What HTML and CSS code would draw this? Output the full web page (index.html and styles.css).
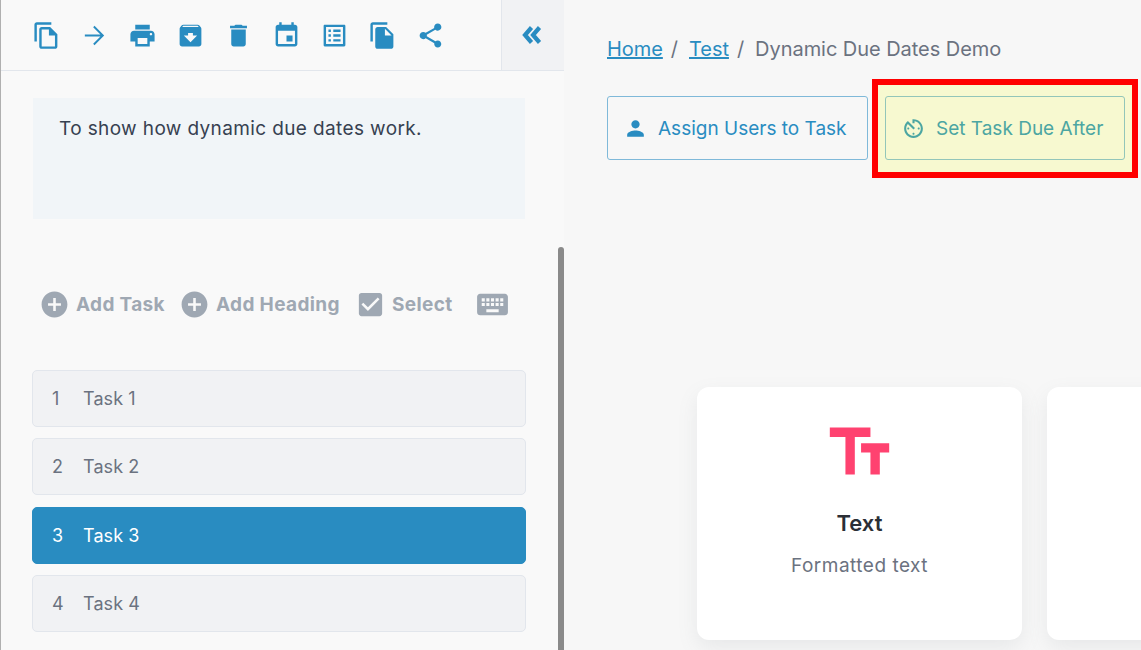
FILE: index.html
```html
<!DOCTYPE html>
<html lang="en">
<head>
<meta charset="utf-8">
<title>Dynamic Due Dates Demo</title>
<link rel="stylesheet" href="styles.css">
</head>
<body>
<div class="app">
  <aside class="sidebar">
    <div class="toolbar">
      <div class="tools">
        <svg class="tool" viewBox="0 0 24 24"><path d="M16 1H4c-1.1 0-2 .9-2 2v14h2V3h12V1zm-1 4l6 6v10c0 1.1-.9 2-2 2H8c-1.1 0-2-.9-2-2V7c0-1.1.9-2 2-2h7zm-1 2H8v14h11v-9h-5V7z"/></svg>
        <svg class="tool" viewBox="0 0 24 24"><path d="M12 4l-1.1 1.1L16.9 11.2H4v1.6h12.9l-6 6.1L12 20l8-8z"/></svg>
        <svg class="tool" viewBox="0 0 24 24"><path d="M19 8H5c-1.66 0-3 1.34-3 3v6h4v4h12v-4h4v-6c0-1.66-1.34-3-3-3zm-3 11H8v-5h8v5zm3-7c-.55 0-1-.45-1-1s.45-1 1-1 1 .45 1 1-.45 1-1 1zm-1-9H6v4h12V3z"/></svg>
        <svg class="tool" viewBox="0 0 24 24"><path d="M20.54 5.23l-1.39-1.68C18.88 3.21 18.47 3 18 3H6c-.47 0-.88.21-1.16.55L3.46 5.23C3.17 5.57 3 6.02 3 6.5V19c0 1.1.9 2 2 2h14c1.1 0 2-.9 2-2V6.5c0-.48-.17-.93-.46-1.27zM12 17.5L6.5 12H10v-2h4v2h3.5L12 17.5zM5.12 5l.81-1h12l.94 1H5.12z"/></svg>
        <svg class="tool" viewBox="0 0 24 24"><path d="M6 19c0 1.1.9 2 2 2h8c1.1 0 2-.9 2-2V7H6v12zM19 4h-3.5l-1-1h-5l-1 1H5v2h14V4z"/></svg>
        <svg class="tool" viewBox="0 0 24 24"><path d="M17 12h-5v5h5v-5zM16 1v2H8V1H6v2H5c-1.11 0-1.99.9-1.99 2L3 19c0 1.1.89 2 2 2h14c1.1 0 2-.9 2-2V5c0-1.1-.9-2-2-2h-1V1h-2zm3 18H5V8h14v11z"/></svg>
        <svg class="tool" viewBox="0 0 24 24"><path d="M19 5v14H5V5h14m1.1-2H3.9c-.5 0-.9.4-.9.9v16.2c0 .4.4.9.9.9h16.2c.4 0 .9-.5.9-.9V3.9c0-.5-.5-.9-.9-.9zM11 7h6v2h-6V7zm0 4h6v2h-6v-2zm0 4h6v2h-6zM7 7h2v2H7zm0 4h2v2H7zm0 4h2v2H7z"/></svg>
        <svg class="tool" viewBox="0 0 24 24"><path d="M16 1H4c-1.1 0-2 .9-2 2v14h2V3h12V1zm-1 4l6 6v10c0 1.1-.9 2-2 2H7.99C6.89 23 6 22.1 6 21l.01-14c0-1.1.89-2 1.99-2h7zm-1 7h5.5L14 6.5V12z"/></svg>
        <svg class="tool" viewBox="0 0 24 24"><path d="M18 16.08c-.76 0-1.44.3-1.96.77L8.91 12.7c.05-.23.09-.46.09-.7s-.04-.47-.09-.7l7.05-4.11c.54.5 1.25.81 2.04.81 1.66 0 3-1.34 3-3s-1.34-3-3-3-3 1.34-3 3c0 .24.04.47.09.7L8.04 9.81C7.5 9.31 6.79 9 6 9c-1.66 0-3 1.34-3 3s1.34 3 3 3c.79 0 1.5-.31 2.04-.81l7.12 4.16c-.05.21-.08.43-.08.65 0 1.61 1.31 2.92 2.92 2.92 1.61 0 2.92-1.31 2.92-2.92s-1.31-2.92-2.92-2.92z"/></svg>
      </div>
      <div class="collapse">
        <svg class="collapse-icon" viewBox="0 0 20 18"><path d="M9.5 1.5 3 9l6.5 7.5M17.5 1.5 11 9l6.5 7.5"/></svg>
      </div>
    </div>
    <div class="desc">To show how dynamic due dates work.</div>
    <div class="actions">
      <span class="action act-task"><svg class="act-icon" viewBox="0 0 24 24"><path d="M12 2C6.48 2 2 6.48 2 12s4.48 10 10 10 10-4.48 10-10S17.52 2 12 2zm5 11h-4v4h-2v-4H7v-2h4V7h2v4h4v2z"/></svg>Add Task</span>
      <span class="action act-head"><svg class="act-icon" viewBox="0 0 24 24"><path d="M12 2C6.48 2 2 6.48 2 12s4.48 10 10 10 10-4.48 10-10S17.52 2 12 2zm5 11h-4v4h-2v-4H7v-2h4V7h2v4h4v2z"/></svg>Add Heading</span>
      <span class="action act-select"><svg class="act-icon" viewBox="0 0 24 24"><path d="M19 3H5c-1.11 0-2 .9-2 2v14c0 1.1.89 2 2 2h14c1.11 0 2-.9 2-2V5c0-1.1-.89-2-2-2zm-9 14l-5-5 1.41-1.41L10 14.17l7.59-7.59L19 8l-9 9z"/></svg>Select</span>
      <svg class="act-keyboard" viewBox="0 0 24 24"><path d="M20 5H4c-1.1 0-1.99.9-1.99 2L2 17c0 1.1.9 2 2 2h16c1.1 0 2-.9 2-2V7c0-1.1-.9-2-2-2zm-9 3h2v2h-2V8zm0 3h2v2h-2v-2zM8 8h2v2H8V8zm0 3h2v2H8v-2zm-1 2H5v-2h2v2zm0-3H5V8h2v2zm9 7H8v-2h8v2zm0-4h-2v-2h2v2zm0-3h-2V8h2v2zm3 3h-2v-2h2v2zm0-3h-2V8h2v2z"/></svg>
    </div>
    <ul class="tasks">
      <li class="task"><span class="num">1</span>Task 1</li>
      <li class="task"><span class="num">2</span>Task 2</li>
      <li class="task active"><span class="num">3</span>Task 3</li>
      <li class="task"><span class="num">4</span>Task 4</li>
    </ul>
    <div class="scrollbar"></div>
  </aside>
  <main class="main">
    <nav class="crumbs">
      <a class="crumb-link">Home</a><span class="sep">/</span>
      <a class="crumb-link">Test</a><span class="sep">/</span>
      <span class="crumb-current">Dynamic Due Dates Demo</span>
    </nav>
    <div class="buttons">
      <button class="btn btn-assign">
        <svg class="btn-icon" viewBox="0 0 24 24"><path d="M12 12c2.21 0 4-1.79 4-4s-1.79-4-4-4-4 1.79-4 4 1.79 4 4 4zm0 2c-2.67 0-8 1.34-8 4v2h16v-2c0-2.66-5.33-4-8-4z"/></svg>
        Assign Users to Task
      </button>
      <div class="highlight">
        <button class="btn btn-due">
          <svg class="btn-icon" viewBox="0 0 24 24"><path d="M11 17c0 .55.45 1 1 1s1-.45 1-1-.45-1-1-1-1 .45-1 1zm0-14v4h2V5.08c3.39.49 6 3.39 6 6.92 0 3.87-3.13 7-7 7s-7-3.13-7-7c0-1.68.59-3.22 1.58-4.42L12 13l1.41-1.41-6.8-6.8v.02C4.42 6.45 3 9.05 3 12c0 4.97 4.03 9 9 9 4.97 0 9-4.03 9-9s-4.03-9-9-9h-1zm7 9c0-.55-.45-1-1-1s-1 .45-1 1 .45 1 1 1 1-.45 1-1zM6 12c0 .55.45 1 1 1s1-.45 1-1-.45-1-1-1-1 .45-1 1z"/></svg>
          Set Task Due After
        </button>
      </div>
    </div>
    <div class="cards">
      <div class="card">
        <svg class="card-icon" viewBox="0 0 24 24"><path d="M2.5 4v3h5v12h3V7h5V4h-13zm19 5h-9v3h3v7h3v-7h3V9z"/></svg>
        <div class="card-title">Text</div>
        <div class="card-sub">Formatted text</div>
      </div>
      <div class="card"></div>
    </div>
  </main>
</div>
</body>
</html>
```
FILE: styles.css
```css
* { box-sizing: border-box; }
html, body { margin: 0; height: 100%; overflow: hidden; }
body { font-family: "Inter", "Open Sans", sans-serif; color: #6b7280; background: #f7f7f7; }

.app { display: flex; height: 650px; }

.sidebar { position: relative; width: 564px; flex: none; height: 650px; background: #f9f9f9; border-left: 1px solid #b0b0b0; overflow: hidden; }

.toolbar { display: flex; height: 71px; border-bottom: 1px solid #e2e6ec; }
.tools { flex: 1; display: flex; align-items: center; gap: 19px; padding-left: 31px; }
.tool { width: 29px; height: 29px; fill: #298cc1; flex: none; }
.collapse { width: 63px; display: flex; align-items: center; justify-content: center; background: #f1f2f4; border-left: 1px solid #e2e6ec; }
.collapse-icon { width: 20px; height: 18px; fill: none; stroke: #298cc1; stroke-width: 4.2; margin-right: 2px; }

.desc { margin: 27px 39px 0 32px; height: 121px; padding: 19px 26px; background: #f1f5f8; color: #374151; font-size: 19px; letter-spacing: 0.38px; line-height: 24px; }

.actions { display: flex; align-items: center; margin: 68px 0 0 38px; height: 34px; font-size: 19px; letter-spacing: 0.35px; font-weight: 700; color: #9fa8b3; }
.action { display: flex; align-items: center; gap: 6px; }
.act-icon { width: 31px; height: 31px; fill: #9fa8b3; flex: none; }
.act-keyboard { width: 37px; height: 37px; fill: #9fa8b3; flex: none; }
.act-task { width: 140px; }
.act-head { width: 176px; }
.act-select { width: 119px; }

.tasks { list-style: none; margin: 49px 38px 0 31px; padding: 0; display: flex; flex-direction: column; gap: 11.3px; }
.task { height: 57px; display: flex; align-items: center; padding-left: 19px; background: #f1f2f4; border: 1px solid #e2e6ec; border-radius: 5px; font-size: 18px; letter-spacing: 0.1px; color: #6b7280; }
.num { width: 31px; }
.task.active { background: #298cc1; border-color: #298cc1; color: #fff; }

.scrollbar { position: absolute; right: 0; top: 247px; bottom: 0; width: 6px; background: #8a8a8a; border-radius: 3px 3px 0 0; }

.main { flex: 1; min-width: 0; padding: 37px 0 0 43px; overflow: hidden; }

.crumbs { display: flex; align-items: center; height: 24px; font-size: 20px; letter-spacing: -0.05px; }
.crumb-link { color: #298cc1; text-decoration: underline; }
.sep { margin: 0 11px 0 8px; color: #6b7280; }
.crumb-current { color: #6b7280; }

.buttons { display: flex; gap: 17px; margin-top: 35px; }
.btn { display: flex; align-items: center; gap: 10px; height: 64px; border-radius: 3px; font: inherit; font-size: 19px; background: transparent; padding: 0; }
.btn-icon { width: 25px; height: 25px; flex: none; }
.btn-assign { width: 261px; padding-left: 15px; color: #298cc1; border: 1px solid #7fb9d9; }
.btn-assign .btn-icon { fill: #298cc1; }
.highlight { position: relative; z-index: 0; }
.highlight::after { content: ""; position: absolute; inset: -17px -13px -18px -13px; z-index: -1; background: #f7f9d0; border: 6px solid #ff0000; }
.btn-due { width: 240px; padding-left: 15px; color: #4ca6a2; border: 1px solid #93c6b9; }
.btn-due .btn-icon { fill: #4ca6a2; }

.cards { display: flex; gap: 25px; margin: 227px 0 0 90px; }
.card { width: 325px; height: 253px; flex: none; background: #fff; border-radius: 12px; box-shadow: 0 8px 20px rgba(120, 130, 140, 0.12); display: flex; flex-direction: column; align-items: center; padding-top: 28px; }
.card-icon { width: 75px; height: 75px; fill: #ff4270; flex: none; }
.card-title { margin-top: 19px; font-size: 22px; line-height: 28px; font-weight: 600; color: #2b2f36; }
.card-sub { margin-top: 15px; font-size: 19px; letter-spacing: 0.5px; line-height: 28px; color: #6b7280; }
```
